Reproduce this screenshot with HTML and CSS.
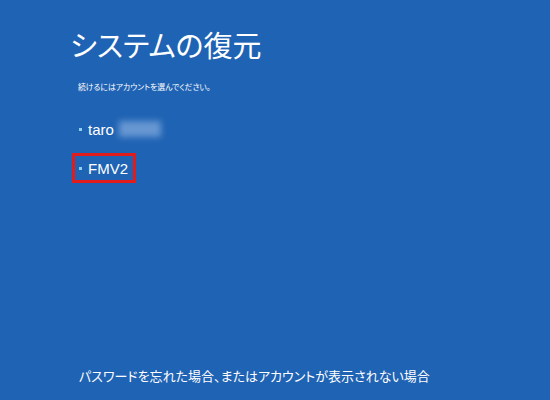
FILE: index.html
```html
<!DOCTYPE html>
<html lang="ja">
<head>
    <meta charset="UTF-8">
    <title>システムの復元</title>
    <link rel="stylesheet" href="styles.css">
</head>
<body>
    <div class="screen">
        <h1 class="title">システムの復元</h1>
        <p class="lead">続けるにはアカウントを選んでください。</p>

        <ul class="accounts">
            <li class="account"><span class="dot"></span>taro<span class="masked"></span></li>
            <li class="account selected"><span class="dot"></span>FMV2</li>
        </ul>

        <a class="forgot" href="#">パスワードを忘れた場合、またはアカウントが表示されない場合</a>
    </div>
</body>
</html>
```

FILE: styles.css
```css
body {
    margin: 0;
    background-color: #1f63b4;
    font-family: "Noto Sans CJK JP", "Noto Sans", sans-serif;
    color: #fff;
}

.screen {
    width: 550px;
    height: 400px;
    box-sizing: border-box;
    padding: 24px 0 0 70px;
    display: flex;
    flex-direction: column;
}

.title {
    margin: 0;
    font-size: 29px;
    font-weight: normal;
    line-height: 40px;
    font-feature-settings: "palt";
}

.lead {
    margin: 18px 0 0 8px;
    font-size: 7.8px;
    line-height: 10px;
    font-feature-settings: "palt";
}

.accounts {
    list-style: none;
    margin: 22px 0 0 2px;
    padding: 0;
}

.account {
    display: flex;
    align-items: center;
    align-self: flex-start;
    width: max-content;
    height: 24px;
    padding: 0 5px 0 4px;
    font-family: "Liberation Sans", Arial, sans-serif;
    font-size: 15px;
    border: 3px solid transparent;
}

.account + .account {
    margin-top: 9px;
}

.dot {
    flex: none;
    width: 3px;
    height: 3px;
    margin-right: 6px;
    background: #8fd0f0;
}

.masked {
    display: inline-block;
    width: 42px;
    height: 16px;
    margin-left: 5px;
    background: #6797d2;
    filter: blur(3px);
}

.selected {
    border-color: #e21b1b;
}

.forgot {
    margin-top: auto;
    margin-bottom: 15px;
    margin-left: 9px;
    color: #fff;
    text-decoration: none;
    font-size: 13px;
    font-feature-settings: "palt";
}
```
